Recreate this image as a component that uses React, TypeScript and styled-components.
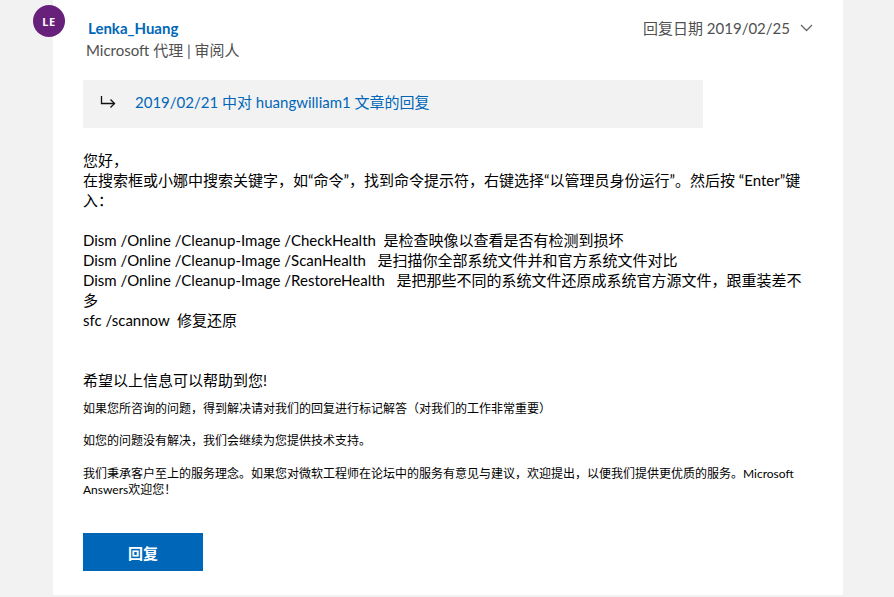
import React from "react";
import styled, { createGlobalStyle } from "styled-components";

const GlobalStyle = createGlobalStyle`
  html, body { margin: 0; padding: 0; background: #f2f2f2; }
  body {
    font-family: "Lato", "Noto Sans CJK SC", sans-serif;
    color: #000;
    -webkit-font-smoothing: antialiased;
  }
`;

const Page = styled.div`
  display: flex;
  padding-left: 53px;
  height: 597px;
  overflow: hidden;
`;

const Card = styled.div`
  position: relative;
  width: 790px;
  height: 595px;
  background: #fff;
  box-sizing: border-box;
  padding: 18px 30px 0 30px;
  display: flex;
  flex-direction: column;
`;

const Avatar = styled.div`
  position: absolute;
  left: -20px;
  top: 5px;
  width: 32px;
  height: 32px;
  border-radius: 50%;
  background: #68217a;
  color: #fff;
  font-family: "Noto Sans", sans-serif;
  font-size: 11px;
  font-weight: 700;
  display: flex;
  align-items: center;
  justify-content: center;
  letter-spacing: 0.5px;
`;

const Header = styled.div`
  display: flex;
  justify-content: space-between;
  align-items: flex-start;
  padding-left: 5px;
`;

const Author = styled.div`
  display: flex;
  flex-direction: column;
`;

const Name = styled.div`
  color: #0067b8;
  font-size: 15px;
  font-weight: 700;
  line-height: 20px;
`;

const Role = styled.div`
  color: #505050;
  font-size: 15px;
  line-height: 24px;
  margin-left: -2px;
`;

const DateRow = styled.div`
  display: flex;
  align-items: center;
  gap: 10px;
  color: #505050;
  font-size: 15px;
  line-height: 20px;
`;

const Quote = styled.div`
  margin-top: 18px;
  width: 620px;
  height: 48px;
  background: #f2f2f2;
  display: flex;
  align-items: center;
  box-sizing: border-box;
  padding: 0 0 5px 17px;
  gap: 18px;
`;

const QuoteLink = styled.span`
  color: #0067b8;
  font-size: 15px;
`;

const Body = styled.div`
  margin-top: 22px;
  width: 730px;
  font-size: 15px;
  line-height: 20px;
`;

const Para = styled.p<{ $gap?: number }>`
  margin: 0;
  margin-top: ${(p) => p.$gap ?? 0}px;
`;

const Small = styled.p<{ $gap?: number }>`
  margin: 0;
  margin-top: ${(p) => p.$gap ?? 0}px;
  font-size: 12px;
  line-height: 16px;
`;

const ReplyButton = styled.button`
  margin-top: 35px;
  width: 120px;
  height: 38px;
  border: none;
  background: #0067b8;
  color: #fff;
  font-family: inherit;
  font-size: 15px;
  font-weight: 700;
  cursor: pointer;
`;

const ReplyArrow = () => (
  <svg width="17" height="14" viewBox="0 0 17 14" fill="none" stroke="#111" strokeWidth="1.3">
    <path d="M1.5 1v7.5h13" />
    <path d="M10.5 4.5l4 4-4 4" />
  </svg>
);

const Chevron = () => (
  <svg width="13" height="8" viewBox="0 0 13 8" fill="none" stroke="#666" strokeWidth="1.3">
    <path d="M1 1l5.5 5.5L12 1" />
  </svg>
);

export default function App() {
  return (
    <>
      <GlobalStyle />
      <Page>
        <Card>
          <Avatar>LE</Avatar>
          <Header>
            <Author>
              <Name>Lenka_Huang</Name>
              <Role>Microsoft 代理 | 审阅人</Role>
            </Author>
            <DateRow>
              <span>回复日期 2019/02/25</span>
              <Chevron />
            </DateRow>
          </Header>
          <Quote>
            <ReplyArrow />
            <QuoteLink>2019/02/21 中对 huangwilliam1 文章的回复</QuoteLink>
          </Quote>
          <Body>
            <Para>您好，</Para>
            <Para>
              在搜索框或小娜中搜索关键字，如“命令”，找到命令提示符，右键选择“以管理员身份运行”。然后按 “Enter”键入：
            </Para>
            <Para $gap={20}>Dism /Online /Cleanup-Image /CheckHealth&nbsp; 是检查映像以查看是否有检测到损坏</Para>
            <Para>Dism /Online /Cleanup-Image /ScanHealth&nbsp;&nbsp; 是扫描你全部系统文件并和官方系统文件对比</Para>
            <Para>
              Dism /Online /Cleanup-Image /RestoreHealth&nbsp;&nbsp; 是把那些不同的系统文件还原成系统官方源文件，跟重装差不多
            </Para>
            <Para>sfc /scannow&nbsp; 修复还原</Para>
            <Para $gap={40}>希望以上信息可以帮助到您!</Para>
            <Small $gap={11}>如果您所咨询的问题，得到解决请对我们的回复进行标记解答（对我们的工作非常重要）</Small>
            <Small $gap={16}>如您的问题没有解决，我们会继续为您提供技术支持。</Small>
            <Small $gap={17}>
              我们秉承客户至上的服务理念。如果您对微软工程师在论坛中的服务有意见与建议，欢迎提出，以便我们提供更优质的服务。Microsoft
              Answers欢迎您！
            </Small>
          </Body>
          <ReplyButton>回复</ReplyButton>
        </Card>
      </Page>
    </>
  );
}
